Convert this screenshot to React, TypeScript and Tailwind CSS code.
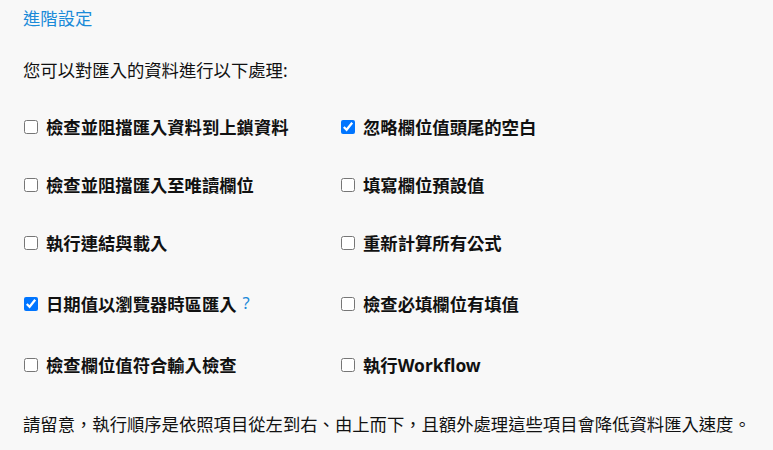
import React from "react";

const items: { label: string; checked?: boolean; help?: boolean }[] = [
  { label: "檢查並阻擋匯入資料到上鎖資料" },
  { label: "忽略欄位值頭尾的空白", checked: true },
  { label: "檢查並阻擋匯入至唯讀欄位" },
  { label: "填寫欄位預設值" },
  { label: "執行連結與載入" },
  { label: "重新計算所有公式" },
  { label: "日期值以瀏覽器時區匯入", checked: true, help: true },
  { label: "檢查必填欄位有填值" },
  { label: "檢查欄位值符合輸入檢查" },
  { label: "執行Workflow" },
];

export default function App() {
  return (
    <div
      className="w-full min-h-screen bg-[#f8f8f8] pl-[23px] pt-[5px] text-[#111111]"
      style={{ fontFamily: '"Noto Sans", "Noto Sans CJK TC", sans-serif' }}
    >
      <div className="text-[17.33px] leading-[26px] text-[#1a8ad8]">進階設定</div>
      <p className="mt-[26px] text-[17.33px] leading-[26px]">您可以對匯入的資料進行以下處理:</p>
      <div className="mt-[15px] grid grid-cols-[317px_1fr] grid-rows-[58px_58px_58px_64px_58px]">
        {items.map((it, i) => (
          <label key={i} className="flex items-center">
            <input
              type="checkbox"
              defaultChecked={!!it.checked}
              className="ml-[1px] h-[14px] w-[14px] shrink-0"
            />
            <span className="ml-[8px] text-[17.33px] leading-[26px] font-bold">{it.label}</span>
            {it.help && (
              <span className="ml-[6px] -mt-[2px] text-[16.5px] leading-[20px] text-[#1a8ad8]">?</span>
            )}
          </label>
        ))}
      </div>
      <p className="mt-[17px] text-[17.33px] leading-[26px]">
        請留意，執行順序是依照項目從左到右、由上而下，且額外處理這些項目會降低資料匯入速度。
      </p>
    </div>
  );
}
